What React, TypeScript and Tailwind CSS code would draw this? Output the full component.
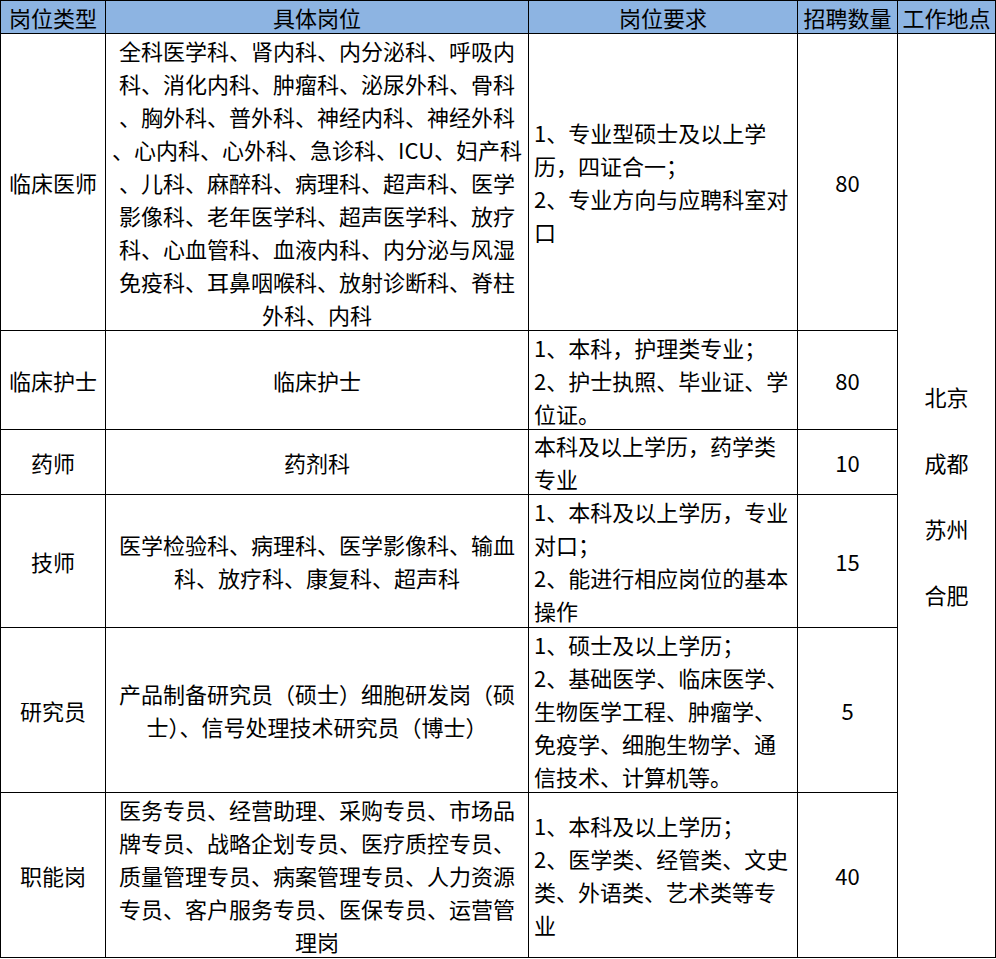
import React from "react";

type Row = {
  type: string;
  h: string;
  pos: string[];
  req: string[];
  num: string;
};

const rows: Row[] = [
  {
    type: "临床医师",
    h: "h-[297px]",
    pos: [
      "全科医学科、肾内科、内分泌科、呼吸内",
      "科、消化内科、肿瘤科、泌尿外科、骨科",
      "、胸外科、普外科、神经内科、神经外科",
      "、心内科、心外科、急诊科、ICU、妇产科",
      "、儿科、麻醉科、病理科、超声科、医学",
      "影像科、老年医学科、超声医学科、放疗",
      "科、心血管科、血液内科、内分泌与风湿",
      "免疫科、耳鼻咽喉科、放射诊断科、脊柱",
      "外科、内科",
    ],
    req: ["1、专业型硕士及以上学", "历，四证合一；", "2、专业方向与应聘科室对", "口"],
    num: "80",
  },
  {
    type: "临床护士",
    h: "h-[99px]",
    pos: ["临床护士"],
    req: ["1、本科，护理类专业；", "2、护士执照、毕业证、学", "位证。"],
    num: "80",
  },
  {
    type: "药师",
    h: "h-[65px]",
    pos: ["药剂科"],
    req: ["本科及以上学历，药学类", "专业"],
    num: "10",
  },
  {
    type: "技师",
    h: "h-[133px]",
    pos: ["医学检验科、病理科、医学影像科、输血", "科、放疗科、康复科、超声科"],
    req: ["1、本科及以上学历，专业", "对口；", "2、能进行相应岗位的基本", "操作"],
    num: "15",
  },
  {
    type: "研究员",
    h: "h-[165px]",
    pos: ["产品制备研究员（硕士）细胞研发岗（硕", "士）、信号处理技术研究员（博士）"],
    req: [
      "1、硕士及以上学历；",
      "2、基础医学、临床医学、",
      "生物医学工程、肿瘤学、",
      "免疫学、细胞生物学、通",
      "信技术、计算机等。",
    ],
    num: "5",
  },
  {
    type: "职能岗",
    h: "h-[165px]",
    pos: [
      "医务专员、经营助理、采购专员、市场品",
      "牌专员、战略企划专员、医疗质控专员、",
      "质量管理专员、病案管理专员、人力资源",
      "专员、客户服务专员、医保专员、运营管",
      "理岗",
    ],
    req: ["1、本科及以上学历；", "2、医学类、经管类、文史", "类、外语类、艺术类等专", "业"],
    num: "40",
  },
];

const cell = "border-r border-b border-black flex flex-col justify-center";

export default function App() {
  return (
    <div
      className="w-[996px] bg-white text-black text-[22px] leading-[33px]"
      style={{ fontFamily: '"Noto Sans CJK SC", "Noto Sans", sans-serif' }}
    >
      <div className="flex border-l border-t border-black w-[996px]">
        <div className="flex flex-col">
          {/* header */}
          <div className="flex h-[33px] bg-[#8db4e2]">
            <div className={`${cell} w-[105px] items-center`}>岗位类型</div>
            <div className={`${cell} w-[423px] items-center`}>具体岗位</div>
            <div className={`${cell} w-[269px] items-center`}>岗位要求</div>
            <div className={`${cell} w-[100px] items-center whitespace-nowrap`}>招聘数量</div>
          </div>
          {rows.map((r) => (
            <div key={r.type} className={`flex ${r.h}`}>
              <div className={`${cell} w-[105px] items-center`}>{r.type}</div>
              <div className={`${cell} w-[423px] items-center text-center whitespace-nowrap`}>
                {r.pos.map((l, i) => (
                  <div key={i}>{l}</div>
                ))}
              </div>
              <div className={`${cell} w-[269px] items-start pl-[5px] whitespace-nowrap`}>
                {r.req.map((l, i) => (
                  <div key={i}>{l}</div>
                ))}
              </div>
              <div className={`${cell} w-[100px] items-center`}>{r.num}</div>
            </div>
          ))}
        </div>
        <div className="flex flex-col w-[98px]">
          <div className={`${cell} h-[33px] bg-[#8db4e2] items-center whitespace-nowrap`}>工作地点</div>
          <div className={`${cell} h-[924px] items-center`}>
            <div>北京</div>
            <div>&nbsp;</div>
            <div>成都</div>
            <div>&nbsp;</div>
            <div>苏州</div>
            <div>&nbsp;</div>
            <div>合肥</div>
          </div>
        </div>
      </div>
    </div>
  );
}
